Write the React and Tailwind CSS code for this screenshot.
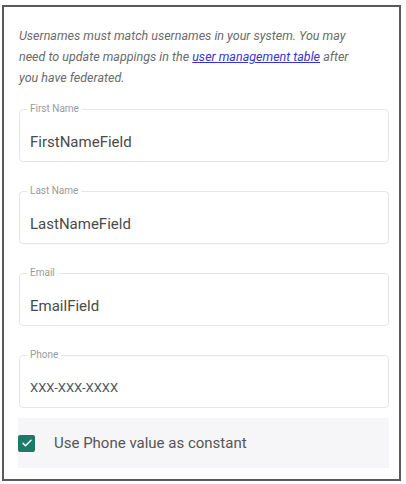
import React from "react";

function Field({ label, value, small }) {
  return (
    <div className="relative h-[53px] rounded-[4px] border border-[#e6e6e6] bg-white">
      <span className="absolute left-[7px] top-[-7px] bg-white px-[3px] text-[10px] leading-[12px] text-[#9a9a9a]">
        {label}
      </span>
      <div
        className={
          small
            ? "flex h-full items-center pl-[10px] pt-[12px] text-[13px] text-[#555]"
            : "flex h-full items-center pl-[10px] pt-[14px] text-[15px] text-[#4a4a4a]"
        }
      >
        {value}
      </div>
    </div>
  );
}

export default function App() {
  return (
    <div className="bg-white pt-[5px] pl-[2px]" style={{ fontFamily: "Roboto, 'Liberation Sans', sans-serif" }}>
      <div className="flex h-[476px] w-[399px] flex-col border-2 border-[#5a5a5a] pl-[14px] pr-[10px] pt-[18px]">
        <p className="pl-[1px] pr-[20px] text-[12.5px] italic leading-[21px] text-[#6b6b6b]">
          Usernames must match usernames in your system. You may need to update mappings in the{" "}
          <a href="#" className="text-[#3535d0] underline">
            user management table
          </a>{" "}
          after you have federated.
        </p>
        <div className="mt-[21px] flex flex-col gap-[29px] pl-[1px]">
          <Field label="First Name" value="FirstNameField" />
          <Field label="Last Name" value="LastNameField" />
          <Field label="Email" value="EmailField" />
          <Field label="Phone" value="XXX-XXX-XXXX" small />
        </div>
        <div className="mt-[10px] flex h-[50px] items-center gap-[19px] bg-[#f6f6f8]">
          <span className="flex h-[17px] w-[17px] items-center justify-center rounded-[2px] bg-[#1d7a66]">
            <svg width="12" height="12" viewBox="0 0 24 24" fill="none" stroke="white" strokeWidth="3" strokeLinecap="round" strokeLinejoin="round">
              <path d="M4 12.5l5 5L20 6.5" />
            </svg>
          </span>
          <span className="text-[15px] text-[#555]">Use Phone value as constant</span>
        </div>
      </div>
    </div>
  );
}
